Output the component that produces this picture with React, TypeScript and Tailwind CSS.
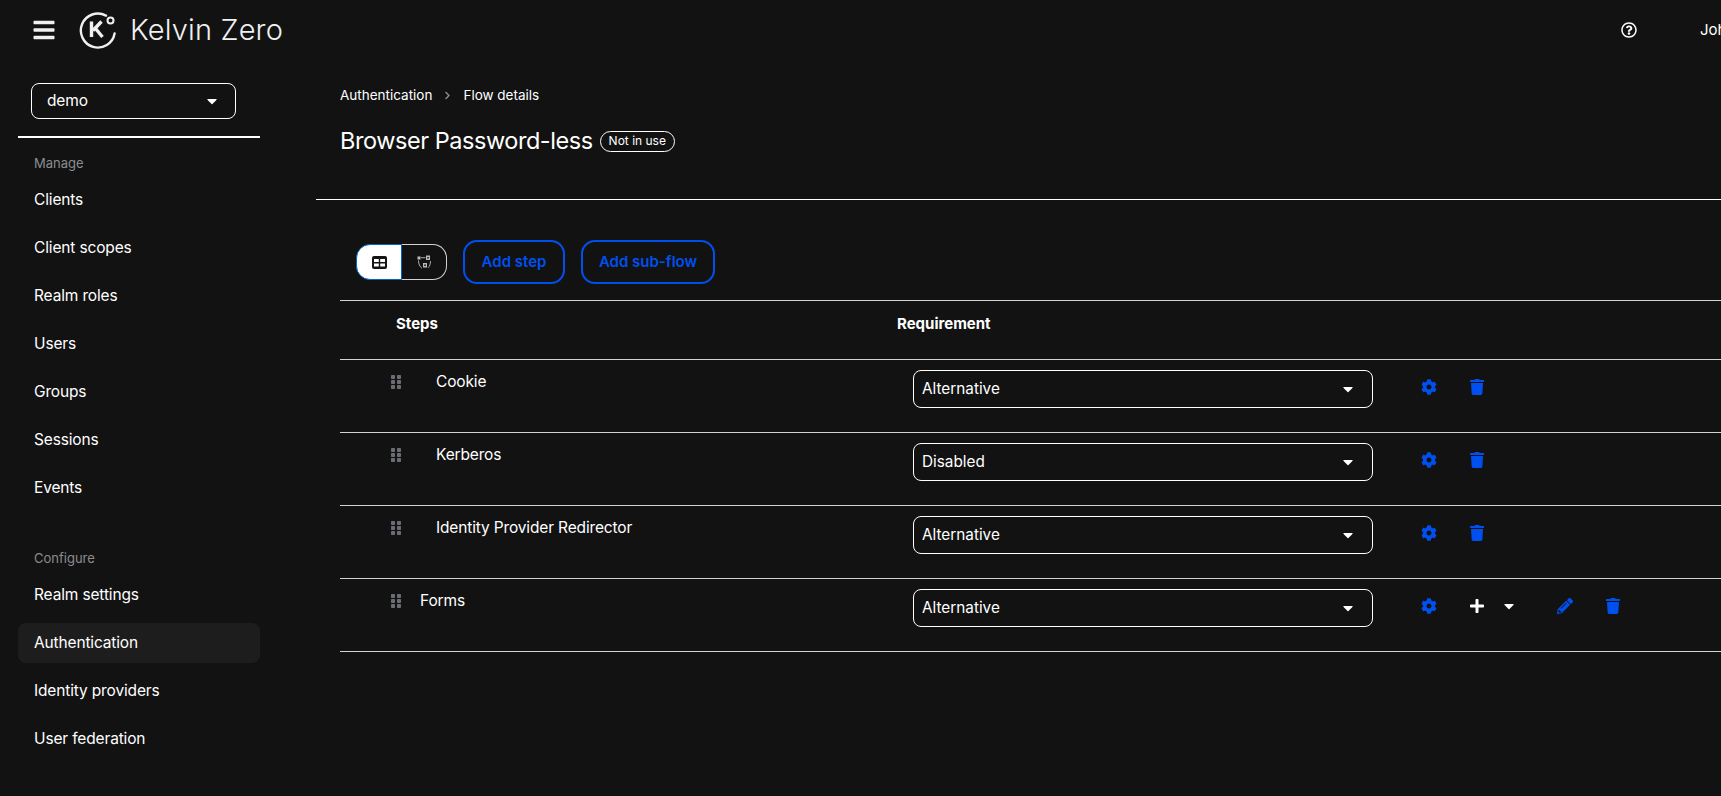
import React from 'react';
import { FaBars, FaCaretDown, FaChevronRight, FaCog, FaGripVertical, FaPencilAlt, FaPlus, FaRegQuestionCircle, FaTrash } from 'react-icons/fa';

const manageItems = ['Clients', 'Client scopes', 'Realm roles', 'Users', 'Groups', 'Sessions', 'Events'];
const configureItems = ['Realm settings', 'Authentication', 'Identity providers', 'User federation'];

interface Step {
  name: string;
  requirement: string;
  indent: boolean;
  subFlow?: boolean;
}

const steps: Step[] = [
  { name: 'Cookie', requirement: 'Alternative', indent: true },
  { name: 'Kerberos', requirement: 'Disabled', indent: true },
  { name: 'Identity Provider Redirector', requirement: 'Alternative', indent: true },
  { name: 'Forms', requirement: 'Alternative', indent: false, subFlow: true },
];

const Logo: React.FC = () => (
  <svg width="38" height="38" viewBox="0 0 38 38" fill="none" className="shrink-0">
    <path d="M27 4.6A17 17 0 1 0 35.6 22.5" stroke="#f0f0f0" strokeWidth="2.4" strokeLinecap="round" />
    <circle cx="31.5" cy="9.5" r="3" stroke="#f0f0f0" strokeWidth="2" />
    <path d="M12.5 10.5v15.5M14 19.5L22.5 10.5M16.5 17.5L23.5 26" stroke="#f0f0f0" strokeWidth="3.4" />
  </svg>
);

const TableIcon: React.FC = () => (
  <svg width="15" height="13" viewBox="0 0 15 13">
    <rect width="15" height="13" rx="2" fill="#151515" />
    <rect x="2" y="3" width="4.8" height="3" fill="#fff" />
    <rect x="8.2" y="3" width="4.8" height="3" fill="#fff" />
    <rect x="2" y="7.5" width="4.8" height="3" fill="#fff" />
    <rect x="8.2" y="7.5" width="4.8" height="3" fill="#fff" />
  </svg>
);

const TopologyIcon: React.FC = () => (
  <svg width="15" height="15" viewBox="0 0 15 15" fill="none">
    <rect x="0.5" y="1.5" width="3" height="3" fill="#bbb" />
    <rect x="9" y="0.5" width="4" height="4.5" fill="#bbb" />
    <rect x="10.2" y="2" width="1.6" height="1.5" fill="#121212" />
    <rect x="6" y="8" width="4" height="4.5" fill="#bbb" />
    <rect x="7.2" y="9.5" width="1.6" height="1.5" fill="#121212" />
    <path d="M4 2.7H8.5M1.5 5.5c0 3.5 1.2 6 3.5 7.8M13.5 6c0 3-.8 5.2-2.5 6.8" stroke="#bbb" strokeWidth="0.9" />
  </svg>
);

const Row: React.FC<{ step: Step }> = ({ step }) => (
  <div className="flex h-[73px] border-b border-[#d2d2d2]">
    <div className="w-[573px] flex shrink-0 pl-[51px] pt-[10px]">
      <FaGripVertical className="text-[#6a6e73] text-[16px] mt-[4px] w-[10px]" />
      <span className={`text-[15.5px] tracking-[-0.15px] leading-6 ${step.indent ? 'ml-[35px]' : 'ml-[19px]'} text-white`}>{step.name}</span>
    </div>
    <div className="pt-[10px] w-[508px] shrink-0">
      <div className="h-[38px] w-[460px] border border-white rounded-lg flex items-center justify-between pl-[8px] pr-[16px] text-[15.3px] text-white">
        {step.requirement}
        <FaCaretDown className="text-[16px]" />
      </div>
    </div>
    <div className="flex items-start pt-[19px] text-[#0050ef] text-[16px]">
      <FaCog className="w-[16px]" />
      {step.subFlow ? (
        <>
          <FaPlus className="ml-[32px] w-[16px] text-white" />
          <FaCaretDown className="ml-[17px] w-[14px] text-[16px] text-white" />
          <FaPencilAlt className="ml-[41px] w-[16px]" />
          <FaTrash className="ml-[32px] w-[16px]" />
        </>
      ) : (
        <FaTrash className="ml-[32px] w-[16px]" />
      )}
    </div>
  </div>
);

const NavItem: React.FC<{ label: string; active?: boolean }> = ({ label, active }) => (
  <div className={`h-10 rounded-lg flex items-center px-4 text-[15.5px] tracking-[-0.15px] text-white ${active ? 'bg-[#1d1d1d]' : ''}`}>{label}</div>
);

const App: React.FC = () => {
  return (
    <div className="h-[796px] w-full overflow-hidden bg-[#121212] text-white font-['Inter','Liberation_Sans',sans-serif] flex flex-col">
      <header className="h-[60px] shrink-0 flex items-center pl-[32px]">
        <FaBars className="text-[24px] text-[#f0f0f0]" />
        <div className="ml-[23px] flex items-center">
          <Logo />
        </div>
        <span className="ml-[13px] text-[29px] font-light tracking-[0.15px] text-[#f0f0f0]">Kelvin Zero</span>
        <div className="ml-auto flex items-center">
          <FaRegQuestionCircle className="text-[16px]" />
          <span className="ml-[63px] w-[21px] overflow-hidden whitespace-nowrap text-[15px]">John Doe</span>
        </div>
      </header>

      <div className="flex flex-1 min-h-0">
        <aside className="w-[316px] shrink-0 pl-[18px] pt-[23px]">
          <div className="w-[242px]">
            <div className="ml-[13px] h-[36px] w-[205px] border border-white rounded-lg flex items-center justify-between pl-[15px] pr-[15px] text-[15.5px] tracking-[-0.15px]">
              demo
              <FaCaretDown className="text-[16px]" />
            </div>
            <div className="mt-[17px] border-t-2 border-white" />
            <div className="mt-[15px] pl-4 text-[13px] leading-5 text-[#8a8d90]">Manage</div>
            <nav className="mt-[7px] flex flex-col gap-2">
              {manageItems.map((item) => (
                <NavItem key={item} label={item} />
              ))}
            </nav>
            <div className="mt-[40px] pl-4 text-[13px] leading-5 text-[#8a8d90]">Configure</div>
            <nav className="mt-[7px] flex flex-col gap-2">
              {configureItems.map((item) => (
                <NavItem key={item} label={item} active={item === 'Authentication'} />
              ))}
            </nav>
          </div>
        </aside>

        <main className="flex-1 min-w-0">
          <div className="h-[140px] border-b border-white pl-[24px] pt-[25px]">
            <div className="flex items-center text-[13.5px] leading-5">
              Authentication
              <FaChevronRight className="mx-[11px] text-[#8a8d90] text-[9px]" />
              Flow details
            </div>
            <div className="mt-[20px] flex items-center">
              <h1 className="text-[23.5px] tracking-[-0.45px] leading-8 font-normal">Browser Password-less</h1>
              <span className="ml-[7px] h-[21px] px-2 rounded-full border border-white text-[12px] flex items-center">Not in use</span>
            </div>
          </div>

          <div className="pl-[24px]">
            <div className="pt-[40px] h-[100px] flex items-start">
              <div className="ml-[16px] mt-[4px] h-[36px] w-[91px] flex">
                <div className="w-[46px] bg-white border border-[#0066cc] rounded-l-[14px] flex items-center justify-center">
                  <TableIcon />
                </div>
                <div className="flex-1 border border-l-0 border-[#d2d2d2] rounded-r-[14px] flex items-center justify-center">
                  <TopologyIcon />
                </div>
              </div>
              <button className="ml-[16px] h-[44px] w-[102px] rounded-[14px] border-2 border-[#0050ef] text-[#0050ef] text-[15px] font-semibold">Add step</button>
              <button className="ml-[16px] h-[44px] w-[134px] rounded-[14px] border-2 border-[#0050ef] text-[#0050ef] text-[15px] font-semibold">Add sub-flow</button>
            </div>

            <div className="border-t border-[#d2d2d2]">
              <div className="flex h-[59px] border-b border-[#d2d2d2] text-[15px] font-bold">
                <div className="w-[557px] shrink-0 pl-[56px] pt-[12px]">Steps</div>
                <div className="pt-[12px]">Requirement</div>
              </div>
              {steps.map((step) => (
                <Row key={step.name} step={step} />
              ))}
            </div>
          </div>
        </main>
      </div>
    </div>
  );
};

export default App;
